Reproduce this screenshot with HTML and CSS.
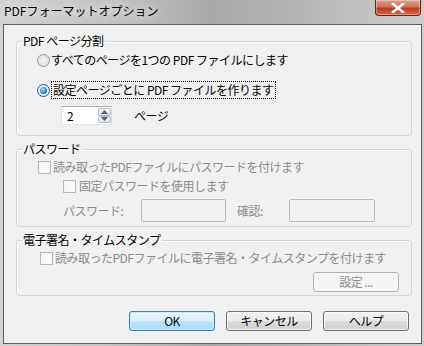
FILE: index.html
```html
<!DOCTYPE html>
<html lang="ja">
<head>
<meta charset="utf-8">
<title>PDFフォーマットオプション</title>
<link rel="stylesheet" href="styles.css">
</head>
<body>
<div class="window">
  <div class="titlebar">
    <span class="title">PDFフォーマットオプション</span>
    <div class="close">
      <svg width="14" height="10" viewBox="0 0 14 10"><path d="M2 1 L12 9 M12 1 L2 9" stroke="#fff" stroke-width="2.6" stroke-linecap="square"/></svg>
    </div>
  </div>
  <div class="client">
    <fieldset class="group g1">
      <legend>PDF ページ分割</legend>
      <div class="row r1"><span class="radio"></span><span class="label">すべてのページを1つの PDF ファイルにします</span></div>
      <div class="row r2"><span class="radio checked"></span><span class="label focus">設定ページごとに PDF ファイルを作ります</span></div>
      <div class="row spinrow">
        <div class="spin">
          <span class="val">2</span>
          <div class="arrows">
            <span class="arr"><svg width="7" height="4" viewBox="0 0 7 4"><path d="M0 4 L3.5 0 L7 4Z" fill="#4d6185"/></svg></span>
            <span class="arr"><svg width="7" height="4" viewBox="0 0 7 4"><path d="M0 0 L3.5 4 L7 0Z" fill="#4d6185"/></svg></span>
          </div>
        </div>
        <span class="unit">ページ</span>
      </div>
    </fieldset>

    <fieldset class="group g2">
      <legend>パスワード</legend>
      <div class="row cb1"><span class="check"></span><span class="label dis">読み取ったPDFファイルにパスワードを付けます</span></div>
      <div class="row cb2"><span class="check"></span><span class="label dis">固定パスワードを使用します</span></div>
      <div class="row pwrow">
        <span class="dis pwlabel">パスワード:</span>
        <span class="edit e1"></span>
        <span class="dis cflabel">確認:</span>
        <span class="edit e2"></span>
      </div>
    </fieldset>

    <fieldset class="group g3">
      <legend>電子署名・タイムスタンプ</legend>
      <div class="row cb3"><span class="check"></span><span class="label dis">読み取ったPDFファイルに電子署名・タイムスタンプを付けます</span></div>
      <div class="btnrow"><span class="btn disabled">設定 ...</span></div>
    </fieldset>

    <div class="actions">
      <span class="btn default">OK</span>
      <span class="btn">キャンセル</span>
      <span class="btn">ヘルプ</span>
    </div>
  </div>
</div>
</body>
</html>
```

FILE: styles.css
```css
* { box-sizing: border-box; }
html, body { margin: 0; padding: 0; }
body {
  font-family: "Noto Sans CJK JP", "Noto Sans", sans-serif;
  font-size: 12px;
  color: #000;
  width: 424px;
  height: 346px;
  overflow: hidden;
}
.window {
  width: 424px;
  height: 346px;
  display: flex;
  flex-direction: column;
  padding: 0 2px 2px 3px;
  background: linear-gradient(to right, #d2d2d2 0%, #c4c4c4 25%, #a9a9a9 50%, #b4b4b4 70%, #cdcdcd 100%);
}
.titlebar {
  height: 24px;
  display: flex;
  justify-content: space-between;
  align-items: flex-start;
}
.title {
  line-height: 22px;
  padding-left: 1px;
  color: #000;
  text-shadow: 0 0 6px #e8e8e8, 0 0 8px #e8e8e8;
}
.close {
  width: 46px;
  height: 16px;
  margin-right: 1px;
  border: 1px solid #5b2a22;
  border-top: none;
  border-radius: 0 0 4px 4px;
  background: linear-gradient(to bottom, #e2a391 0%, #d2705a 45%, #c0391f 55%, #d36a4c 100%);
  display: flex;
  align-items: center;
  justify-content: center;
  box-shadow: inset 0 0 0 1px rgba(255,255,255,0.35);
}
.client {
  flex: 1;
  background: #f0f0f0;
  border: 1px solid #5f5f5f;
  padding: 8px 9px 0 12px;
  display: flex;
  flex-direction: column;
  letter-spacing: -0.5px;
}
.group {
  margin: 0;
  padding: 0;
  border: 1px solid #d5d5d5;
  border-radius: 3px;
  box-shadow: inset 1px 1px 0 #fff;
  min-width: 0;
}
.group legend {
  margin-left: 5px;
  padding: 0 2px 0 1px;
  line-height: 16px;
}
.row {
  display: flex;
  align-items: center;
  height: 16px;
  line-height: 16px;
}
.radio {
  width: 13px;
  height: 13px;
  border-radius: 50%;
  border: 1px solid #9a9a9a;
  background: radial-gradient(circle at 50% 50%, #f4f4f4 0%, #e2e2e2 60%, #d4d4d4 100%);
  display: inline-flex;
  align-items: center;
  justify-content: center;
  flex: none;
}
.radio.checked {
  border-color: #2d618a;
  background: radial-gradient(circle at 50% 50%, #ffffff 0%, #dce8f3 70%, #b9cfe2 100%);
}
.radio.checked::after {
  content: "";
  width: 7px;
  height: 7px;
  border-radius: 50%;
  background: radial-gradient(circle at 40% 35%, #9fe2ff 0%, #3d9bd6 45%, #0f4f88 100%);
}
.g1 .r1 { margin: 3px 0 0 20px; }
.g1 .r2 { margin: 14px 0 0 20px; }
.g1 .r1 .label { margin-left: 1px; }
.focus {
  outline: 1px dotted #000;
  outline-offset: 0;
  padding: 0 1px;
  margin-left: 2px;
}
.spinrow {
  height: 19px;
  margin: 8px 0 10px 44px;
}
.spin {
  width: 51px;
  height: 19px;
  border: 1px solid #abadb3;
  border-left-color: #e2e3ea;
  border-right-color: #dbdfe6;
  border-bottom-color: #e3e9ef;
  background: #fff;
  display: flex;
  justify-content: space-between;
}
.val {
  padding-left: 5px;
  line-height: 17px;
}
.arrows {
  width: 13px;
  display: flex;
  flex-direction: column;
  padding: 1px 0;
}
.arr {
  flex: 1;
  border: 1px solid #b6bcc6;
  border-radius: 2px;
  background: linear-gradient(to bottom, #f5f6f8, #dfe4ea);
  display: flex;
  align-items: center;
  justify-content: center;
}
.unit { margin-left: 22px; line-height: 19px; }

.g2 { margin-top: 5px; padding-bottom: 4px; }
.check {
  width: 13px;
  height: 13px;
  border: 1px solid #b8b8b8;
  background: linear-gradient(135deg, #f4f4f4, #fcfcfc);
  box-shadow: inset 0 0 0 1px #f6f6f6;
  flex: none;
}
.dis { color: #8c8c8c; }
.g2 .cb1 { margin: 2px 0 0 21px; }
.g2 .cb1 .label { margin-left: 2px; }
.g2 .cb2 { margin: 3px 0 0 46px; }
.g2 .cb2 .label { margin-left: 3px; }
.pwrow {
  height: 23px;
  margin: 5px 0 0 46px;
}
.pwlabel { width: 78px; flex: none; }
.edit {
  height: 23px;
  border: 1px solid #b9b9b9;
  border-radius: 2px;
  background: #f0f0f0;
  display: inline-block;
  flex: none;
}
.e1 { width: 85px; }
.cflabel { width: 52px; margin-left: 11px; flex: none; }
.e2 { width: 86px; }

.g3 { margin-top: 5px; padding-bottom: 3px; }
.g3 .cb3 { margin: 2px 0 0 23px; }
.g3 .cb3 .label { margin-left: 2px; }
.btnrow {
  display: flex;
  justify-content: flex-end;
  margin: 6px 12px 0 0;
}
.btn {
  height: 20px;
  width: 86px;
  border: 1px solid #707070;
  border-radius: 3px;
  background: linear-gradient(to bottom, #f2f2f2 0%, #ebebeb 50%, #dddddd 50%, #cfcfcf 100%);
  box-shadow: inset 0 0 0 1px rgba(255,255,255,0.7);
  display: inline-flex;
  align-items: center;
  justify-content: center;
  line-height: 16px;
}
.btn.disabled {
  color: #8c8c8c;
  border-color: #adb2b5;
  background: #f4f4f4;
  box-shadow: none;
}
.btn.default {
  border-color: #3c7fb1;
  background: linear-gradient(to bottom, #eaf6fd 0%, #d9f0fc 50%, #bee6fd 50%, #a7d9f5 100%);
  box-shadow: inset 0 0 0 1px #c8e9fa;
}
.actions {
  display: flex;
  justify-content: flex-end;
  gap: 11px;
  margin: 15px 3px 0 0;
}
```
